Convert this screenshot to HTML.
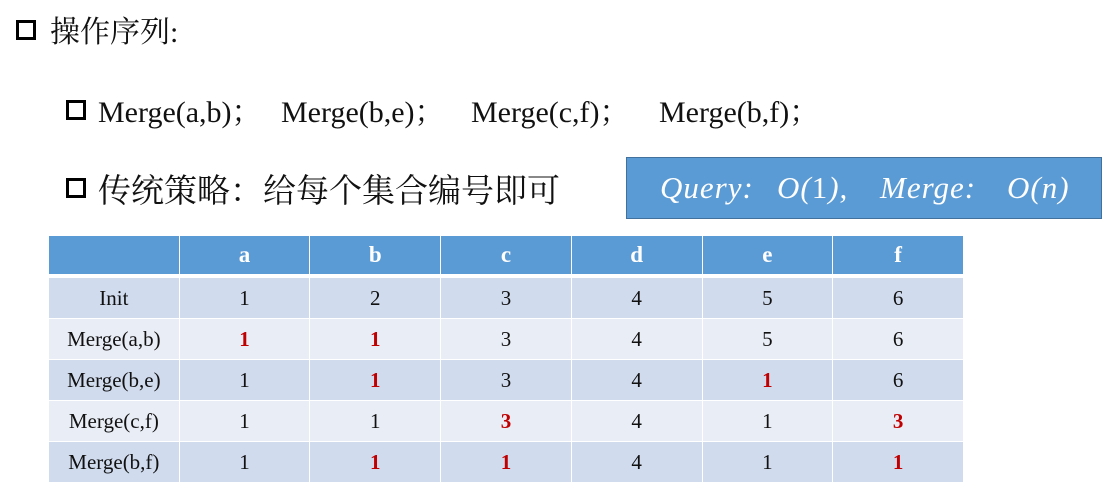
<!DOCTYPE html>
<html><head><meta charset="utf-8"><style>
body{margin:0;width:1111px;height:489px;background:#fff;position:relative;overflow:hidden;font-family:"Liberation Serif","Noto Serif CJK SC",serif;color:#111}
.t{position:absolute;white-space:nowrap}
.cb{position:absolute;width:14px;height:14px;border:3.5px solid #000}
.box{position:absolute;left:626px;top:157px;width:474px;height:60px;background:#5b9bd5;border:1px solid #41719c;color:#fff;font-style:italic;font-size:31px;line-height:60px;letter-spacing:1px}
table{position:absolute;left:48px;top:235px;border-collapse:collapse;font-size:21px;table-layout:fixed;width:916px}
td{height:40px;text-align:center;border:1.5px solid #fff;padding:0}
tr.h td{height:38px;background:#5b9bd5;color:#fff;font-weight:bold;font-size:23px;border-bottom:4px solid #fff}
tr.d td{background:#d0dbee}
tr.l td{background:#e9edf6}
.r{color:#c00000;font-weight:bold}
</style></head><body>
<div class="cb" style="left:16px;top:20px"></div>
<div class="t" style="left:50px;top:7px;font-size:30px">操作序列:</div>
<div class="cb" style="left:66px;top:100px"></div>
<div class="t" style="left:98px;top:87px;font-size:30px">Merge(a,b)；</div>
<div class="t" style="left:281px;top:87px;font-size:30px">Merge(b,e)；</div>
<div class="t" style="left:471px;top:87px;font-size:30px">Merge(c,f)；</div>
<div class="t" style="left:659px;top:87px;font-size:30px">Merge(b,f)；</div>
<div class="cb" style="left:66px;top:178px"></div>
<div class="t" style="left:98px;top:165px;font-size:33px">传统策略：给每个集合编号即可</div>
<div class="box"><span style="position:absolute;left:33px">Query:</span><span style="position:absolute;left:150px">O(<span style="font-style:normal">1</span>),</span><span style="position:absolute;left:253px">Merge:</span><span style="position:absolute;left:380px">O(n)</span></div>
<table>
<tr class="h"><td></td><td>a</td><td>b</td><td>c</td><td>d</td><td>e</td><td>f</td></tr>
<tr class="d"><td>Init</td><td>1</td><td>2</td><td>3</td><td>4</td><td>5</td><td>6</td></tr>
<tr class="l"><td>Merge(a,b)</td><td class="r">1</td><td class="r">1</td><td>3</td><td>4</td><td>5</td><td>6</td></tr>
<tr class="d"><td>Merge(b,e)</td><td>1</td><td class="r">1</td><td>3</td><td>4</td><td class="r">1</td><td>6</td></tr>
<tr class="l"><td>Merge(c,f)</td><td>1</td><td>1</td><td class="r">3</td><td>4</td><td>1</td><td class="r">3</td></tr>
<tr class="d"><td>Merge(b,f)</td><td>1</td><td class="r">1</td><td class="r">1</td><td>4</td><td>1</td><td class="r">1</td></tr>
</table>
</body></html>
